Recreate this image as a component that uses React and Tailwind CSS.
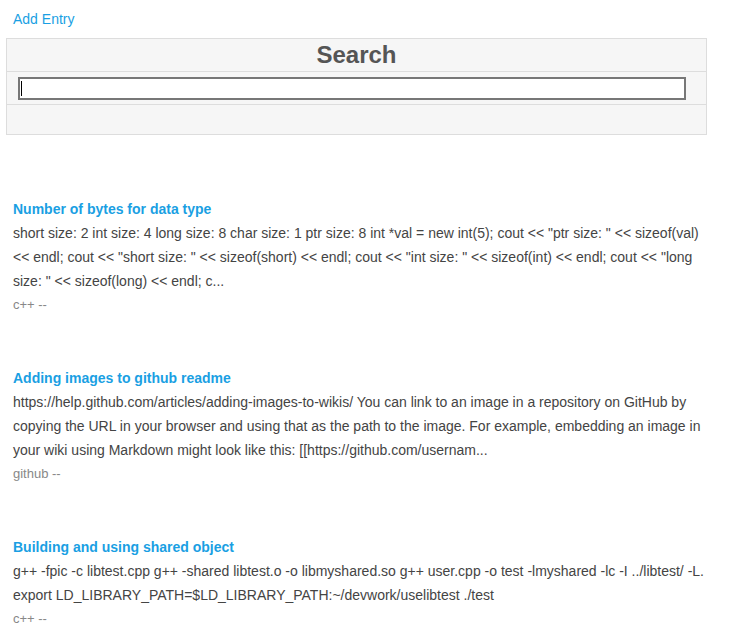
import React from "react";

const entries = [
  {
    title: "Number of bytes for data type",
    body: 'short size: 2 int size: 4 long size: 8 char size: 1 ptr size: 8 int *val = new int(5); cout << "ptr size: " << sizeof(val) << endl; cout << "short size: " << sizeof(short) << endl; cout << "int size: " << sizeof(int) << endl; cout << "long size: " << sizeof(long) << endl; c...',
    tag: "c++ --",
  },
  {
    title: "Adding images to github readme",
    body: "https://help.github.com/articles/adding-images-to-wikis/ You can link to an image in a repository on GitHub by copying the URL in your browser and using that as the path to the image. For example, embedding an image in your wiki using Markdown might look like this: [[https://github.com/usernam...",
    tag: "github --",
  },
  {
    title: "Building and using shared object",
    body: "g++ -fpic -c libtest.cpp g++ -shared libtest.o -o libmyshared.so g++ user.cpp -o test -lmyshared -lc -I ../libtest/ -L. export LD_LIBRARY_PATH=$LD_LIBRARY_PATH:~/devwork/uselibtest ./test",
    tag: "c++ --",
  },
];

export default function App() {
  return (
    <div className="min-h-screen bg-white px-[6px] font-['Liberation_Sans',Arial,sans-serif] text-[#444]">
      <div className="pl-[7px] pt-[10px] text-[14px] leading-[18px]">
        <a href="#" className="text-[#1a9fe3]">Add Entry</a>
      </div>
      <div className="mt-[10px] w-[701px] border border-[#dddddd] bg-[#f6f6f6]">
        <div className="h-[33px] border-b border-[#dddddd] text-center text-[24px] font-bold leading-[32px] text-[#555]">
          Search
        </div>
        <div className="h-[33px] border-b border-[#dddddd] pl-[11px] pt-[5px]">
          <div className="relative h-[23px] w-[668px] border-2 border-[#777] bg-white">
            <span className="absolute left-[1px] top-[2px] h-[15px] w-px bg-black" />
            <input className="h-full w-full bg-transparent outline-none" />
          </div>
        </div>
        <div className="h-[29px]" />
      </div>

      <div className="pl-[7px] pt-[63px]">
        {entries.map((e, i) => (
          <div key={i} className={`w-[700px] ${i > 0 ? "mt-[50px]" : ""}`}>
            <a href="#" className="block text-[14px] font-bold leading-[23px] text-[#1a9fe3]">
              {e.title}
            </a>
            <p className="text-[14px] leading-[24px] text-[#444]">{e.body}</p>
            <div className="text-[13px] leading-[24px] text-[#888]">{e.tag}</div>
          </div>
        ))}
      </div>
    </div>
  );
}
